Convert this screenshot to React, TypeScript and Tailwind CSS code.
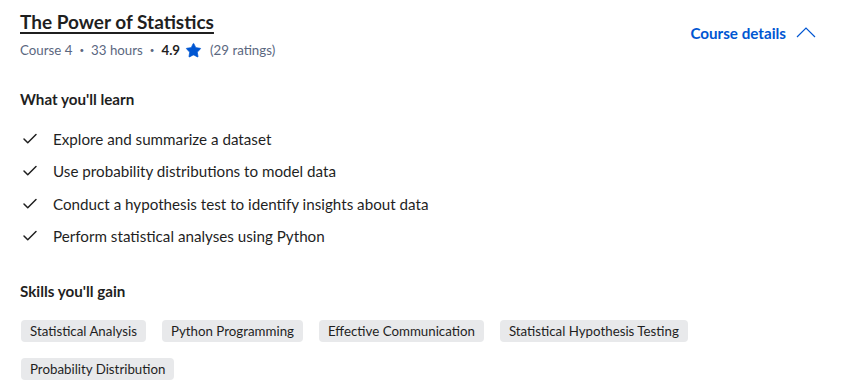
import { Check, Star } from "lucide-react";

const CourseOutline = () => {
  const learn = [
    "Explore and summarize a dataset",
    "Use probability distributions to model data",
    "Conduct a hypothesis test to identify insights about data",
    "Perform statistical analyses using Python",
  ];

  const skills = [
    "Statistical Analysis",
    "Python Programming",
    "Effective Communication",
    "Statistical Hypothesis Testing",
    "Probability Distribution",
  ];

  return (
    <div
      className="w-[847px] h-[387px] bg-white text-[#1f1f1f] px-5 pt-[10px]"
      style={{ fontFamily: "Lato, 'Liberation Sans', sans-serif" }}
    >
      <div className="flex justify-between">
        <div>
          <h2 className="text-[19px] leading-[24px] font-bold underline underline-offset-[3px] decoration-[2px]">
            The Power of Statistics
          </h2>
          <div className="flex items-center text-[13.3px] leading-[20px] text-[#5b6780] mt-[6px]">
            <span>Course 4</span>
            <span className="mx-[7px] text-[8px]">•</span>
            <span>33 hours</span>
            <span className="mx-[7px] text-[8px]">•</span>
            <span className="font-bold text-[#1f1f1f]">4.9</span>
            <Star className="w-[17px] h-[17px] mx-[5px] text-[#0056d2]" fill="#0056d2" strokeWidth={1} />
            <span className="ml-[3px]">(29 ratings)</span>
          </div>
        </div>
        <button className="flex items-center gap-[10px] mt-[12px] mr-[11px] h-[22px] text-[#0056d2] font-bold text-[15.2px] leading-[22px]">
          Course details
          <svg width="20" height="11" viewBox="0 0 20 11" fill="none" className="mt-[-1px]">
            <polyline points="1,10 10,1 19,10" stroke="#0056d2" strokeWidth="1.2" />
          </svg>
        </button>
      </div>

      <h3 className="mt-[28px] text-[15.2px] leading-[22px] font-bold">What you'll learn</h3>
      <ul className="mt-[18px] flex flex-col gap-[10.3px]">
        {learn.map((item, index) => (
          <li key={`learn-${index}`} className="flex items-center text-[15.2px] leading-[22px]">
            <Check className="w-[18px] h-[18px] ml-[1px] mr-[14px] text-[#1f1f1f]" strokeWidth={2} />
            {item}
          </li>
        ))}
      </ul>

      <h3 className="mt-[33px] text-[15.2px] leading-[22px] font-bold">Skills you'll gain</h3>
      <div className="mt-[18px] ml-[1px] flex flex-wrap gap-x-[16px] gap-y-[16px] w-[700px]">
        {skills.map((skill, index) => (
          <span
            key={`skill-${index}`}
            className="bg-[#e8e9eb] text-[#1f1f1f] text-[13.3px] leading-[22px] px-[9px] rounded-[4px]"
          >
            {skill}
          </span>
        ))}
      </div>
    </div>
  );
};

export default CourseOutline;
